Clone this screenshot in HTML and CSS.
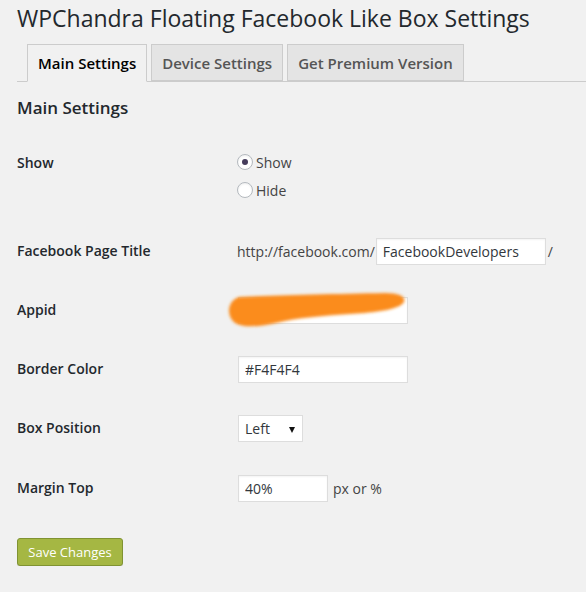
FILE: index.html
```html
<!DOCTYPE html>
<html>
<head>
<meta charset="utf-8">
<link rel="stylesheet" href="styles.css">
</head>
<body>
<div class="wrap">
  <h1 class="title">WPChandra Floating Facebook Like Box Settings</h1>
  <nav class="tabs">
    <a class="tab active">Main Settings</a>
    <a class="tab">Device Settings</a>
    <a class="tab">Get Premium Version</a>
  </nav>
  <h2 class="section">Main Settings</h2>
  <div class="form">
    <div class="row row-show">
      <div class="label">Show</div>
      <div class="field radios">
        <label class="radio-line"><span class="radio checked"></span>Show</label>
        <label class="radio-line"><span class="radio"></span>Hide</label>
      </div>
    </div>
    <div class="row">
      <div class="label">Facebook Page Title</div>
      <div class="field inline">
        <span class="muted">http://facebook.com/</span>
        <input class="text fb" type="text" value="FacebookDevelopers">
        <span class="muted">/</span>
      </div>
    </div>
    <div class="row">
      <div class="label">Appid</div>
      <div class="field">
        <div class="redacted">
          <input class="text" type="text" value="">
          <svg class="scribble" width="192" height="50" viewBox="0 0 192 50">
            <defs><filter id="b" x="-10%" y="-40%" width="120%" height="180%"><feGaussianBlur stdDeviation="1.7"/></filter></defs>
            <g filter="url(#b)" fill="#fb8c1b" transform="translate(0,4)">
              <path d="M14 5 C50 3 110 2 160 1 C175 1 181 5 179 10 C176 16 160 19 140 21 C110 23 80 25 60 29 C40 34 20 37 10 31 C1 24 2 9 14 5 Z"/>
            </g>
          </svg>
        </div>
      </div>
    </div>
    <div class="row">
      <div class="label">Border Color</div>
      <div class="field"><input class="text" type="text" value="#F4F4F4"></div>
    </div>
    <div class="row row-pos">
      <div class="label">Box Position</div>
      <div class="field"><span class="select">Left<span class="caret"></span></span></div>
    </div>
    <div class="row">
      <div class="label">Margin Top</div>
      <div class="field inline"><input class="text small" type="text" value="40%"><span class="muted">px or %</span></div>
    </div>
  </div>
  <div class="submit"><button class="button">Save Changes</button></div>
</div>
</body>
</html>
```
FILE: styles.css
```css
html, body {
  margin: 0;
  padding: 0;
  background: #f1f1f1;
}
body {
  font-family: "Open Sans", "Liberation Sans", sans-serif;
  color: #444;
  font-size: 14px;
}
.wrap {
  padding: 0 0 0 17px;
}
.title {
  margin: 0;
  padding: 4px 0 0 0;
  font-size: 23px;
  line-height: 29px;
  font-weight: 400;
  color: #23282d;
  height: 40px;
}
.tabs {
  display: flex;
  gap: 4px;
  padding-left: 10px;
  border-bottom: 1px solid #ccc;
  height: 37px;
}
.tab {
  box-sizing: border-box;
  height: 37px;
  padding: 0 10px;
  border: 1px solid #ccc;
  background: #e4e4e4;
  color: #555;
  font-size: 15px;
  font-weight: 600;
  line-height: 36px;
  text-decoration: none;
}
.tab.active {
  background: #f1f1f1;
  color: #000;
  border-bottom-color: #f1f1f1;
  height: 38px;
}
.section {
  margin: 0;
  padding-top: 14px;
  height: 38px;
  font-size: 17px;
  line-height: 24px;
  font-weight: 600;
  color: #23282d;
}
.form {
  display: flex;
  flex-direction: column;
}
.row {
  display: grid;
  grid-template-columns: 220px 1fr;
  padding: 16px 0;
}
.row-show {
  padding-bottom: 18px;
}
.row-pos {
  padding-bottom: 17px;
}
.label {
  font-weight: 600;
  color: #23282d;
  line-height: 26px;
}
.field {
  display: flex;
  flex-direction: column;
  align-items: flex-start;
  color: #444;
}
.field.inline {
  flex-direction: row;
  align-items: center;
  min-height: 27px;
}
.radios {
  margin-top: -2px;
}
.radio-line {
  display: flex;
  align-items: center;
  height: 28px;
  gap: 3px;
  color: #444;
}
.radio {
  box-sizing: border-box;
  width: 16px;
  height: 16px;
  border-radius: 50%;
  border: 1px solid #b4b9be;
  background: #fff;
  box-shadow: inset 0 1px 2px rgba(0,0,0,0.07);
  display: flex;
  align-items: center;
  justify-content: center;
}
.radio.checked::after {
  content: "";
  width: 6px;
  height: 6px;
  border-radius: 50%;
  background: #463d5c;
}
.text {
  box-sizing: border-box;
  width: 170px;
  height: 27px;
  margin: 0 0 0 1px;
  padding: 0 6px;
  border: 1px solid #ddd;
  background: #fff;
  box-shadow: inset 0 1px 2px rgba(0,0,0,0.05);
  font-family: "Open Sans", "Liberation Sans", sans-serif;
  font-size: 14px;
  color: #32373c;
  outline: none;
}
.text.fb {
  margin: 0 2px 0 1px;
}
.text.small {
  width: 90px;
  margin-right: 5px;
}
.muted {
  color: #444;
}
.redacted {
  position: relative;
}
.scribble {
  position: absolute;
  left: -12px;
  top: -9px;
}
.select {
  box-sizing: border-box;
  position: relative;
  display: block;
  width: 65px;
  height: 27px;
  margin-left: 1px;
  padding: 0 6px;
  border: 1px solid #ddd;
  background: #fff;
  color: #32373c;
  line-height: 25px;
}
.caret {
  position: absolute;
  right: 7px;
  top: 11px;
  width: 0;
  height: 0;
  border-left: 3.5px solid transparent;
  border-right: 3.5px solid transparent;
  border-top: 6px solid #111;
}
.submit {
  padding-top: 20px;
}
.button {
  box-sizing: border-box;
  width: 106px;
  height: 28px;
  padding: 0;
  border: 1px solid #809332;
  border-radius: 3px;
  background: #a5b743;
  color: #fff;
  font-family: "Open Sans", "Liberation Sans", sans-serif;
  font-size: 13px;
  box-shadow: 0 1px 0 rgba(0,0,0,0.12);
}
```
